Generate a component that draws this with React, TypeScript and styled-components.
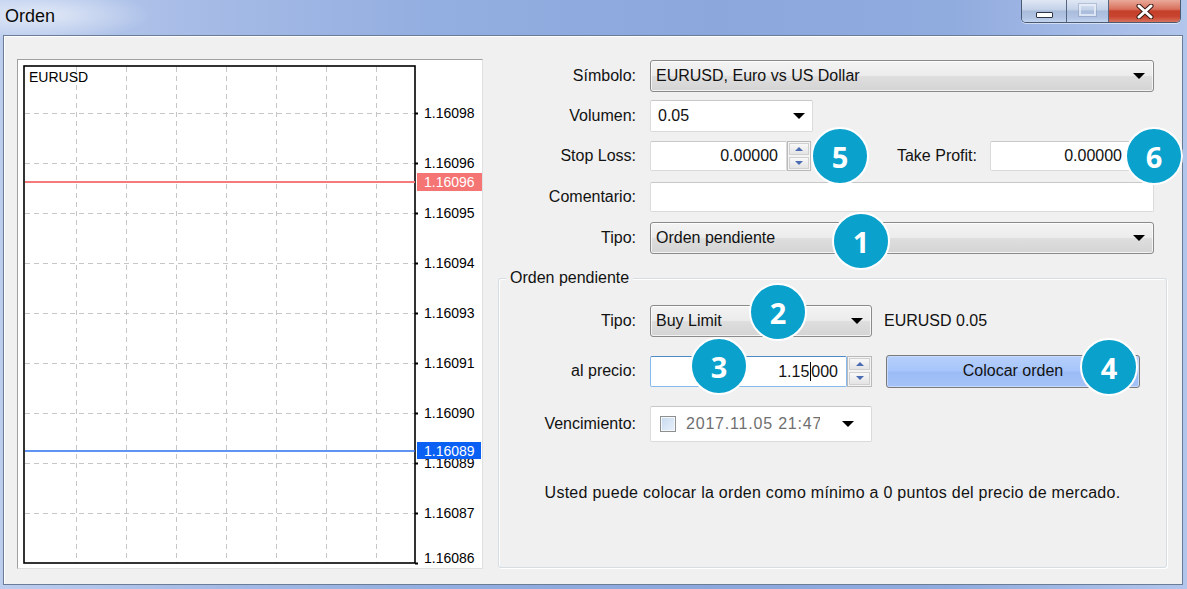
import React from "react";
import styled, { createGlobalStyle } from "styled-components";

const FONT = `"Liberation Sans", Arial, sans-serif`;

const GlobalStyle = createGlobalStyle`
  html, body { margin: 0; padding: 0; background: #ffffff; overflow: hidden; }
  body { font-family: ${FONT}; }
  * { box-sizing: border-box; }
`;

const Window = styled.div`
  width: 1187px;
  height: 589px;
  display: flex;
  flex-direction: column;
  padding: 0 4px 4px 3px;
  background:
    radial-gradient(ellipse 150px 34px at 40px 15px, rgba(255,255,255,0.6), rgba(255,255,255,0) 75%),
    linear-gradient(90deg, #bccdee 0%, #a7bce6 16%, #93aee0 36%, #8ba7dc 60%, #90abde 80%, #b2c6ec 100%);
`;

const TitleBar = styled.div`
  height: 35px;
  display: flex;
  align-items: flex-start;
  flex-shrink: 0;
`;

const Title = styled.div`
  padding-left: 2px;
  font-size: 18px;
  line-height: 32px;
  color: #0b0b0b;
`;

const Controls = styled.div`
  display: flex;
  height: 23px;
  margin-left: auto;
  margin-right: 2px;
  border: 1px solid #4b5a74;
  border-top: none;
  border-radius: 0 0 5px 5px;
  overflow: hidden;
  box-shadow: 0 1px 0 rgba(255, 255, 255, 0.55);
`;

type BtnKind = "min" | "max" | "close";

const WinBtn = styled.div<{ $w: number; $kind: BtnKind }>`
  width: ${(p) => p.$w}px;
  height: 100%;
  display: flex;
  align-items: center;
  justify-content: center;
  border-left: ${(p) => (p.$kind === "min" ? "none" : "1px solid #56667f")};
  background: ${(p) =>
    p.$kind === "close"
      ? "linear-gradient(#e9a99a, #d8705c 42%, #c4402a 50%, #c8442e 75%, #d7725e)"
      : "linear-gradient(#dfe7f4, #c3d1e8 45%, #aabcdb 50%, #b1c4e3 80%, #c4d5ef)"};
`;

const MinIcon = styled.span`
  width: 17px;
  height: 6px;
  margin-top: 8px;
  border: 1px solid #2e3646;
  border-radius: 1px;
  background: #ffffff;
`;

const MaxIcon = styled.span`
  width: 17px;
  height: 12px;
  margin-bottom: 3px;
  border: 2px solid rgba(235, 240, 250, 0.75);
  outline: 1px solid rgba(120, 135, 165, 0.35);
`;

const Client = styled.div`
  flex: 1;
  display: flex;
  align-items: flex-start;
  padding: 20px 0 0 13px;
  border: 1px solid #6b7c96;
  background: #f0f0f0;
  box-shadow: inset 1px 1px 0 #ffffff;
`;

const ChartPanel = styled.div`
  width: 466px;
  height: 510px;
  margin-top: 3px;
  flex-shrink: 0;
  background: #ffffff;
  border-style: solid;
  border-width: 1px;
  border-color: #a0a0a0 #e0e0e0 #e0e0e0 #a0a0a0;
  svg { display: block; }
`;

const RightColumn = styled.div`
  position: relative;
  width: 669px;
  margin-left: 15px;
  display: flex;
  flex-direction: column;
  font-size: 16px;
  color: #121212;
`;

const TopForm = styled.div`
  display: grid;
  grid-template-columns: 138px 1fr;
  grid-template-rows: 40px 40px 40px 41px 42px;
  column-gap: 14px;
  align-items: center;
  margin-right: 13px;
`;

const Label = styled.div`
  text-align: right;
  white-space: nowrap;
  font-size: 16px;
`;

const Cell = styled.div`
  display: flex;
  align-items: center;
  min-width: 0;
`;

const Arrow = styled.span`
  width: 0;
  height: 0;
  flex-shrink: 0;
  border-left: 6px solid transparent;
  border-right: 6px solid transparent;
  border-top: 6px solid #000000;
`;

const Combo = styled.div<{ $w?: number }>`
  display: flex;
  align-items: center;
  height: 32px;
  width: ${(p) => (p.$w ? `${p.$w}px` : "100%")};
  padding: 0 8px 0 5px;
  border: 1px solid #8a8a8a;
  border-radius: 3px;
  background: linear-gradient(#f3f3f3, #ececec 48%, #dedede 52%, #d4d4d4);
  box-shadow: inset 0 0 0 1px rgba(255, 255, 255, 0.7);
  flex-shrink: 0;
`;

const ComboText = styled.span`
  flex: 1;
  white-space: nowrap;
  overflow: hidden;
`;

const Box = styled.div<{ $w?: number; $h: number; $focus?: boolean }>`
  display: flex;
  align-items: center;
  width: ${(p) => (p.$w ? `${p.$w}px` : "100%")};
  height: ${(p) => p.$h}px;
  flex-shrink: 0;
  background: #ffffff;
  border: 1px solid ${(p) => (p.$focus ? "#86b9ec" : "#dadada")};
  border-top-color: ${(p) => (p.$focus ? "#4d8ac4" : "#c8c8c8")};
  border-radius: 2px;
`;

const EditText = styled.span`
  flex: 1;
  padding-left: 7px;
`;

const NumText = styled.span`
  flex: 1;
  text-align: right;
  padding-right: 8px;
  white-space: nowrap;
`;

const Caret = styled.span`
  display: inline-block;
  width: 1px;
  height: 19px;
  margin: 0 0 0 1px;
  vertical-align: -4px;
  background: #000000;
`;

const Spinner = styled.div<{ $w: number; $h: number }>`
  width: ${(p) => p.$w}px;
  height: ${(p) => p.$h}px;
  flex-shrink: 0;
  display: flex;
  flex-direction: column;
  border: 1px solid #b9b9b9;
  background: #f4f4f4;
`;

const SpinHalf = styled.div<{ $down?: boolean }>`
  flex: 1;
  display: flex;
  align-items: center;
  justify-content: center;
  margin: 1px;
  border: 1px solid #d0d0d0;
  background: linear-gradient(#f8f8f8, #e4e4e4);
  &::after {
    content: "";
    width: 0;
    height: 0;
    border-left: 4px solid transparent;
    border-right: 4px solid transparent;
    ${(p) => (p.$down ? "border-top: 4px solid #4b6cb3;" : "border-bottom: 4px solid #4b6cb3;")}
  }
`;

const SideLabel = styled.div`
  margin-left: auto;
  margin-right: 13px;
  white-space: nowrap;
`;

const Group = styled.div`
  position: relative;
  margin-top: 19px;
  height: 290px;
  border: 1px solid #d5dde3;
  border-radius: 3px;
  box-shadow: inset 1px 1px 0 #ffffff, 1px 1px 0 #ffffff;
`;

const Legend = styled.span`
  position: absolute;
  top: -11px;
  left: 7px;
  padding: 0 4px;
  line-height: 20px;
  background: #f0f0f0;
`;

const GroupGrid = styled.div`
  display: grid;
  grid-template-columns: 137px 1fr;
  grid-template-rows: 50px 50px 50px;
  column-gap: 14px;
  align-items: center;
  padding-top: 17px;
`;

const Aside = styled.span`
  margin-left: 12px;
  white-space: nowrap;
`;

const OrderButton = styled.div`
  width: 254px;
  height: 33px;
  margin-left: 14px;
  display: flex;
  align-items: center;
  justify-content: center;
  border: 1px solid #7a7a7a;
  border-radius: 3px;
  background: linear-gradient(#b6d0fc, #a7c5fa 48%, #9bbbf5 52%, #a5c3f8);
  box-shadow: inset 0 0 0 1px #c7dafc;
`;

const DateBox = styled(Box)`
  margin-top: 6px;
  padding: 0 17px 0 9px;
`;

const Check = styled.span`
  width: 16px;
  height: 16px;
  flex-shrink: 0;
  border: 1px solid #8e8f8f;
  background: linear-gradient(135deg, #c6d9ef, #e9f1fb);
  box-shadow: inset 0 0 0 1px #f4f8fd;
`;

const DateText = styled.span`
  width: 134px;
  margin-left: 10px;
  margin-right: auto;
  overflow: hidden;
  white-space: nowrap;
  letter-spacing: 0.8px;
  color: #6f6f6f;
`;

const Info = styled.div`
  margin-top: 37px;
  text-align: center;
  line-height: 20px;
  letter-spacing: 0.27px;
`;

const Badge = styled.div<{ $x: number; $y: number }>`
  position: absolute;
  left: ${(p) => p.$x}px;
  top: ${(p) => p.$y}px;
  width: 58px;
  height: 58px;
  border-radius: 50%;
  border: 2px solid #ffffff;
  background: #0aa1cc;
  color: #ffffff;
  display: flex;
  align-items: center;
  justify-content: center;
  font-family: "Open Sans", "Liberation Sans", sans-serif;
  font-weight: 700;
  font-size: 29px;
  line-height: 1;
  z-index: 2;
`;

const gridX = [58, 108, 158, 208, 258, 308, 358];
const gridY = [53, 103, 153, 203, 253, 303, 353, 403, 453];
const priceLabels: [string, number][] = [
  ["1.16098", 53],
  ["1.16096", 103],
  ["1.16095", 153],
  ["1.16094", 203],
  ["1.16093", 253],
  ["1.16091", 303],
  ["1.16090", 353],
  ["1.16089", 403],
  ["1.16087", 453],
  ["1.16086", 498],
];

function Chart() {
  return (
    <svg width={464} height={508} viewBox="0 0 464 508" fontFamily={FONT} fontSize={14}>
      {gridX.map((x) => (
        <line key={`v${x}`} x1={x + 0.5} y1={7} x2={x + 0.5} y2={503} stroke="#c6c6c6" strokeDasharray="5 4" />
      ))}
      {gridY.map((y) => (
        <line key={`h${y}`} x1={7} y1={y + 0.5} x2={397} y2={y + 0.5} stroke="#c6c6c6" strokeDasharray="5 4" />
      ))}
      <rect x={6} y={6} width={391} height={497} fill="none" stroke="#000" strokeWidth={1.6} />
      {[53, 103, 153, 203, 253, 303, 353, 403, 453, 503].map((y) => (
        <rect key={`t${y}`} x={397} y={y - 0.5} width={3} height={2} fill="#000" />
      ))}
      <text x={11} y={22} fill="#000">EURUSD</text>
      {priceLabels.map(([t, y]) => (
        <text key={t + y} x={406} y={y + 5} fill="#000">{t}</text>
      ))}
      <line x1={7} y1={122} x2={397} y2={122} stroke="#f77a7a" strokeWidth={2} />
      <rect x={399} y={113} width={65} height={18} fill="#f57474" />
      <text x={406} y={127} fill="#ffffff">1.16096</text>
      <line x1={7} y1={391} x2={397} y2={391} stroke="#2a6ff0" strokeWidth={1.5} />
      <rect x={399} y={382} width={64} height={17} fill="#0b60f4" />
      <text x={406} y={396} fill="#ffffff">1.16089</text>
    </svg>
  );
}

function Spin({ w, h }: { w: number; h: number }) {
  return (
    <Spinner $w={w} $h={h}>
      <SpinHalf />
      <SpinHalf $down />
    </Spinner>
  );
}

export default function App() {
  return (
    <>
      <GlobalStyle />
      <Window>
        <TitleBar>
          <Title>Orden</Title>
          <Controls>
            <WinBtn $w={44} $kind="min">
              <MinIcon />
            </WinBtn>
            <WinBtn $w={42} $kind="max">
              <MaxIcon />
            </WinBtn>
            <WinBtn $w={72} $kind="close">
              <svg width="18" height="15" viewBox="0 0 18 15">
                <path d="M3 2 L15 13 M15 2 L3 13" stroke="#3a1a14" strokeWidth="5" strokeLinecap="round" />
                <path d="M3 2 L15 13 M15 2 L3 13" stroke="#ffffff" strokeWidth="3" strokeLinecap="round" />
              </svg>
            </WinBtn>
          </Controls>
        </TitleBar>
        <Client>
          <ChartPanel>
            <Chart />
          </ChartPanel>
          <RightColumn>
            <TopForm>
              <Label>Símbolo:</Label>
              <Cell>
                <Combo>
                  <ComboText>EURUSD, Euro vs US Dollar</ComboText>
                  <Arrow />
                </Combo>
              </Cell>

              <Label>Volumen:</Label>
              <Cell>
                <Box $w={163} $h={32}>
                  <EditText>0.05</EditText>
                  <Arrow style={{ marginRight: 7 }} />
                </Box>
              </Cell>

              <Label>Stop Loss:</Label>
              <Cell>
                <Box $w={137} $h={30}>
                  <NumText>0.00000</NumText>
                </Box>
                <Spin w={24} h={30} />
                <SideLabel>Take Profit:</SideLabel>
                <Box $w={141} $h={30}>
                  <NumText>0.00000</NumText>
                </Box>
                <Spin w={23} h={30} />
              </Cell>

              <Label>Comentario:</Label>
              <Cell>
                <Box $h={30} />
              </Cell>

              <Label>Tipo:</Label>
              <Cell>
                <Combo>
                  <ComboText>Orden pendiente</ComboText>
                  <Arrow />
                </Combo>
              </Cell>
            </TopForm>

            <Group>
              <Legend>Orden pendiente</Legend>
              <GroupGrid>
                <Label>Tipo:</Label>
                <Cell>
                  <Combo $w={222}>
                    <ComboText>Buy Limit</ComboText>
                    <Arrow />
                  </Combo>
                  <Aside>EURUSD 0.05</Aside>
                </Cell>

                <Label>al precio:</Label>
                <Cell>
                  <Box $w={197} $h={31} $focus>
                    <NumText>
                      1.15
                      <Caret />
                      000
                    </NumText>
                  </Box>
                  <Spin w={25} h={31} />
                  <OrderButton>Colocar orden</OrderButton>
                </Cell>

                <Label style={{ marginTop: 6 }}>Vencimiento:</Label>
                <Cell>
                  <DateBox $w={222} $h={36}>
                    <Check />
                    <DateText>2017.11.05 21:47</DateText>
                    <Arrow />
                  </DateBox>
                </Cell>
              </GroupGrid>
              <Info>Usted puede colocar la orden como mínimo a 0 puntos del precio de mercado.</Info>
            </Group>

            <Badge $x={313} $y={71}>5</Badge>
            <Badge $x={627} $y={71}>6</Badge>
            <Badge $x={334} $y={156}>1</Badge>
            <Badge $x={251} $y={227}>2</Badge>
            <Badge $x={192} $y={281}>3</Badge>
            <Badge $x={582} $y={282}>4</Badge>
          </RightColumn>
        </Client>
      </Window>
    </>
  );
}
